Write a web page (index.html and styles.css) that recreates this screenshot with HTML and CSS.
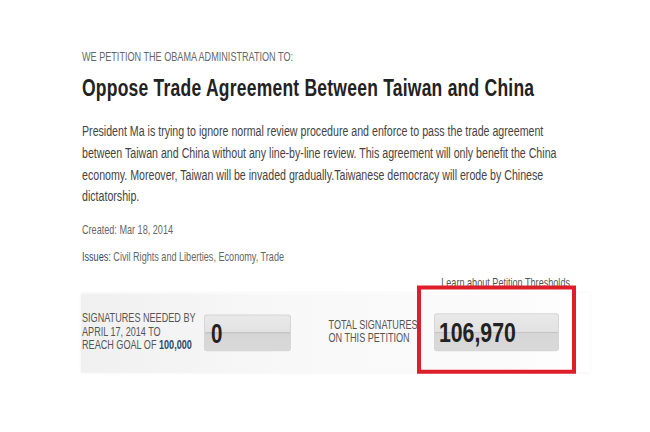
FILE: index.html
```html
<!DOCTYPE html>
<html lang="en">
<head>
    <meta charset="UTF-8">
    <meta name="viewport" content="width=device-width, initial-scale=1.0">
    <title>Oppose Trade Agreement Between Taiwan and China</title>
    <link rel="stylesheet" href="styles.css">
</head>
<body>

<div class="petition">
    <p class="eyebrow">WE PETITION THE OBAMA ADMINISTRATION TO:</p>
    <h1>Oppose Trade Agreement Between Taiwan and China</h1>

    <p class="summary">President Ma is trying to ignore normal review procedure and enforce to pass the trade agreement between Taiwan and China without any line-by-line review. This agreement will only benefit the China economy. Moreover, Taiwan will be invaded gradually.Taiwanese democracy will erode by Chinese dictatorship.</p>

    <p class="meta created">Created: Mar 18, 2014</p>
    <p class="meta"><strong>Issues:</strong> Civil Rights and Liberties, Economy, Trade</p>

    <div class="learn-row">
        <a href="#" class="learn">Learn about Petition Thresholds</a>
    </div>

    <div class="stats">
        <div class="stat stat-needed">
            <p class="stat-label">SIGNATURES NEEDED BY<br>APRIL 17, 2014 TO<br>REACH GOAL OF <b>100,000</b></p>
            <div class="counter counter-small">0</div>
        </div>
        <div class="stat stat-total">
            <p class="stat-label">TOTAL SIGNATURES<br>ON THIS PETITION</p>
            <div class="counter counter-big">106,970</div>
            <!-- red frame drawn round the total -->
            <div class="highlight"></div>
        </div>
    </div>
</div>

</body>
</html>
```

FILE: styles.css
```css
html, body {
    min-height: 100vh;
}

body {
    background-color: #ffffff;
    color: #333;
    font-family: 'Liberation Sans', Arial, sans-serif;
    margin: 0;
    padding: 0;
}

/* tall narrow lettering: small type stretched vertically,
   so every vertical size below is 0.76 of what shows */
.petition {
    padding: 38px 0 0 82px;
    width: 560px;
    transform: scaleY(1.316);
    transform-origin: 0 0;
}

p {
    margin: 0;
}

.eyebrow {
    font-size: 9.1px;
    color: #666;
    line-height: 10.6px;
}

h1 {
    margin: 9.9px 0 0 0;
    font-size: 17.5px;
    letter-spacing: 0.23px;
    line-height: 19.8px;
    color: #222;
    white-space: nowrap;
}

.summary {
    margin-top: 12.9px;
    width: 479px;
    font-size: 10.64px;
    line-height: 16.72px;
    color: #444;
}

.meta {
    font-size: 9.1px;
    color: #666;
    line-height: 10.6px;
    margin-top: 9.1px;
}

.meta.created {
    margin-top: 12.2px;
}

.meta strong {
    color: #2f4a6d;
    font-weight: normal;
}

.learn-row {
    display: flex;
    justify-content: flex-end;
    width: 488px;
    margin-top: 9.9px;
}

.learn {
    font-size: 9.1px;
    color: #555;
    text-decoration: none;
    line-height: 10.6px;
}

.stats {
    display: flex;
    align-items: center;
    width: 509px;
    height: 60.8px;
    margin: 1.5px 0 0 -1px;
    background: linear-gradient(to right, #f0f0f0, #f8f8f8 40%, #fbfbfb 85%, #ffffff);
    box-shadow: 0 -1px 2px #f4f4f4, 0 1px 2px #f4f4f4;
}

.stat {
    display: flex;
    align-items: center;
}

.stat-label {
    font-size: 9.1px;
    line-height: 9.9px;
    color: #555;
    padding-left: 1px;
    box-sizing: border-box;
}

.stat-label b {
    color: #2f4a6d;
}

.stat-needed .stat-label {
    width: 123px;
}

.stat-total {
    position: relative;
    margin-left: 36.5px;
}

.stat-total .stat-label {
    width: 106.4px;
}

.counter {
    height: 27.4px;
    border: 1px solid #d6d6d6;
    border-radius: 3px / 2.3px;
    background: linear-gradient(to bottom, #e9e9e9 0%, #e2e2e2 48%, #b9b9b9 49%, #d6d6d6 53%, #d9d9d9 100%);
    font-weight: bold;
    color: #222;
    line-height: 27.4px;
    padding-left: 6px;
    box-sizing: border-box;
}

.counter-small {
    width: 87px;
    font-size: 20.5px;
}

.counter-big {
    width: 125px;
    font-size: 21.3px;
    height: 28.9px;
    line-height: 28.9px;
    padding-left: 4px;
}

.highlight {
    position: absolute;
    left: 89px;
    top: -21.3px;
    width: 151px;
    height: 60.5px;
    border: 3.4px solid #de1f2a;
    border-left-width: 4.5px;
    border-right-width: 4.5px;
}
```
